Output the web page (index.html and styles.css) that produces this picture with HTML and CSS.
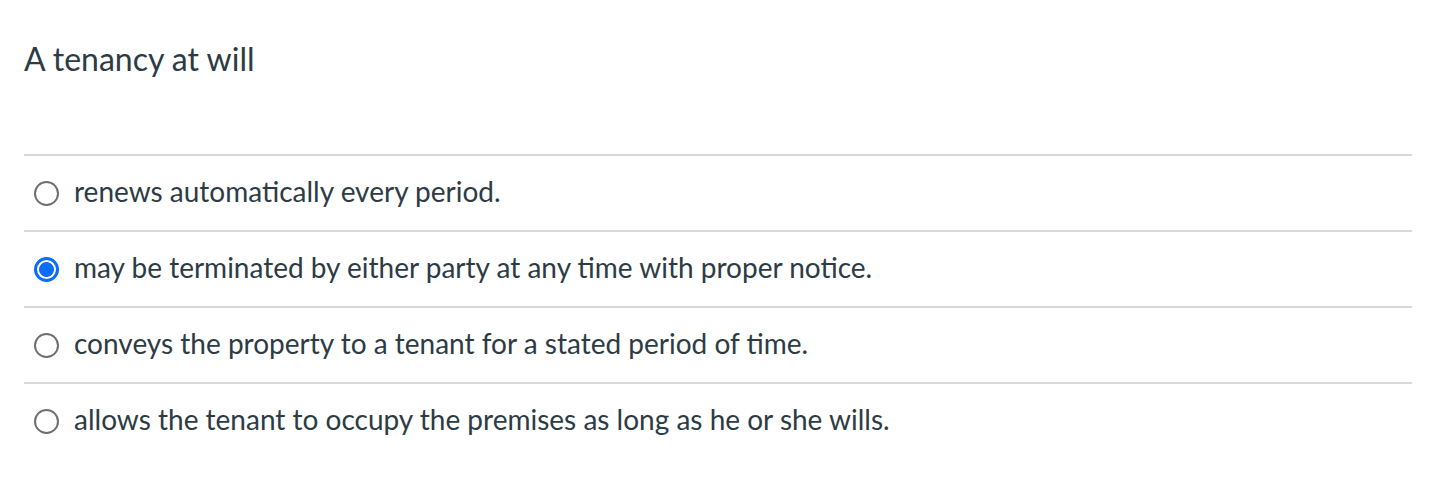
FILE: index.html
```html
<!DOCTYPE html>
<html>
<head>
<meta charset="utf-8">
<link rel="stylesheet" href="styles.css">
</head>
<body>
<div class="question">
  <div class="question-text">A tenancy at will</div>
  <div class="answers">
    <label class="answer"><span class="radio"></span><span class="answer-text">renews automatically every period.</span></label>
    <label class="answer"><span class="radio checked"></span><span class="answer-text">may be terminated by either party at any time with proper notice.</span></label>
    <label class="answer"><span class="radio"></span><span class="answer-text">conveys the property to a tenant for a stated period of time.</span></label>
    <label class="answer"><span class="radio"></span><span class="answer-text">allows the tenant to occupy the premises as long as he or she wills.</span></label>
  </div>
</div>
</body>
</html>
```

FILE: styles.css
```css
html, body {
  margin: 0;
  padding: 0;
  background: #ffffff;
}
body {
  font-family: Lato, "Liberation Sans", sans-serif;
  color: #2d3b45;
}
.question {
  padding: 39px 32px 0 24px;
}
.question-text {
  font-size: 32px;
  line-height: 40px;
  margin-bottom: 75px;
}
.answers {
  border-top: 2px solid #d9d9d9;
}
.answer {
  display: flex;
  align-items: center;
  height: 74px;
  border-bottom: 2px solid #d9d9d9;
  padding-left: 10px;
  font-size: 28px;
}
.answer-text {
  line-height: 34px;
  margin-top: -5px;
}
.answer:last-child {
  border-bottom: none;
}
.radio {
  box-sizing: border-box;
  width: 25px;
  height: 25px;
  border: 2px solid #6f6f6f;
  border-radius: 50%;
  margin-right: 15px;
  flex: none;
}
.radio.checked {
  border: 3px solid #0b6cf7;
  background: radial-gradient(circle, #0b6cf7 0, #0b6cf7 7px, #ffffff 7.8px);
}
```
